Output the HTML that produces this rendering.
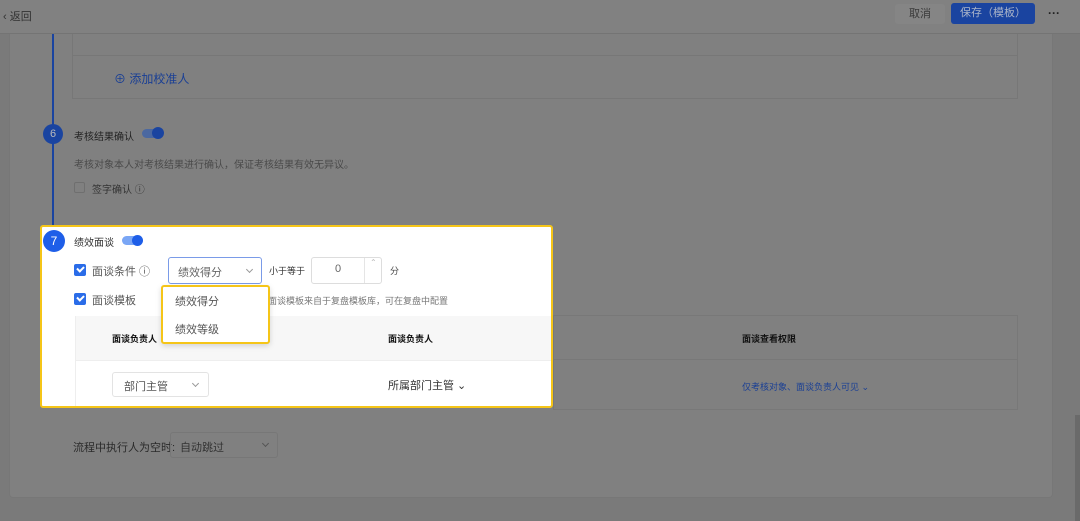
<!DOCTYPE html>
<html><head><meta charset="utf-8"><style>
*{margin:0;padding:0;box-sizing:border-box}
html,body{background:#7a7a7a}
body{width:1080px;height:521px;overflow:hidden;font-family:"Liberation Sans","Noto Sans CJK SC",sans-serif;position:relative;color:#222}
.a{position:absolute;white-space:nowrap}
.card{position:absolute;left:9px;top:0;width:1044px;height:498px;background:#808080;border:1px solid #777;border-radius:4px}
.hdr{position:absolute;left:0;top:0;width:1080px;height:34px;background:#818181;border-bottom:1px solid #747474}
.cb{position:absolute;width:12px;height:12px;background:#2a6ce8;border-radius:2px}
.cb:after{content:"";position:absolute;left:3px;top:2px;width:5px;height:3px;border-left:2px solid #fff;border-bottom:2px solid #fff;transform:rotate(-45deg)}
.chev{display:block;width:5px;height:5px;border-right:1px solid #999;border-bottom:1px solid #999;transform:rotate(45deg)}
</style></head><body>
<div class="card"></div>
<div class="hdr"></div>
<div class="a" style="left:3px;top:8px;font-size:11px;color:#333">‹ 返回</div>
<div class="a" style="left:895px;top:4px;width:50px;height:20px;background:#858585;border-radius:3px;font-size:11px;color:#3a3a3a;text-align:center;line-height:20px">取消</div>
<div class="a" style="left:951px;top:3px;width:84px;height:21px;background:#1a44a0;border-radius:3px;font-size:11px;color:#aab4c8;text-align:center;line-height:21px">保存（模板）</div>
<div class="a" style="left:1048px;top:6px;font-size:12px;color:#222;font-weight:bold">···</div>
<div class="a" style="left:1075px;top:415px;width:5px;height:106px;background:#6a6a6a"></div>
<div class="a" style="left:52px;top:34px;width:2px;height:200px;background:#1a44a0"></div>
<div class="a" style="left:72px;top:34px;width:946px;height:65px;border:1px solid #777;border-top:none;background:#808080"></div>
<div class="a" style="left:72px;top:55px;width:946px;height:1px;background:#777"></div>
<div class="a" style="left:114px;top:70px;font-size:12px;color:#1a3f94">⊕ 添加校准人</div>
<div class="a" style="left:43px;top:124px;width:20px;height:20px;border-radius:50%;background:#1a44a0;color:#bbb;font-size:11px;text-align:center;line-height:20px">6</div>
<div class="a" style="left:74px;top:128px;font-size:10px;color:#222">考核结果确认</div>
<div class="a" style="left:142px;top:129px;width:20px;height:9px;border-radius:5px;background:#4b68a0"></div>
<div class="a" style="left:152px;top:127px;width:12px;height:12px;border-radius:50%;background:#1a44a0"></div>
<div class="a" style="left:74px;top:156px;font-size:10px;color:#4a4a4a">考核对象本人对考核结果进行确认，保证考核结果有效无异议。</div>
<div class="a" style="left:74px;top:182px;width:11px;height:11px;border:1px solid #6f6f6f;border-radius:2px"></div>
<div class="a" style="left:92px;top:181px;font-size:10px;color:#333">签字确认 ⓘ</div>
<div class="a" style="left:73px;top:439px;font-size:11px;color:#2a2a2a">流程中执行人为空时:</div>
<div class="a" style="left:170px;top:432px;width:108px;height:26px;border:1px solid #777;border-radius:3px;font-size:11px;color:#333;padding:6px 0 0 9px">自动跳过</div>
<div class="a" style="left:263px;top:441px"><span class="chev" style="border-color:#555"></span></div>
<div class="a" style="left:553px;top:315px;width:465px;height:95px;background:#808080;border:1px solid #787878"></div>
<div class="a" style="left:553px;top:359px;width:465px;height:1px;background:#787878"></div>
<div class="a" style="left:742px;top:332px;font-size:9px;color:#111;font-weight:bold">面谈查看权限</div>
<div class="a" style="left:742px;top:380px;font-size:9px;color:#1a3f94">仅考核对象、面谈负责人可见 ⌄</div>
<div class="a" style="left:40px;top:225px;width:513px;height:183px;background:#fff;border:2px solid #f5c518;border-radius:3px;overflow:hidden">
 <div class="a" style="left:33px;top:89px;width:480px;height:45px;background:#f7f7f7"></div>
 <div class="a" style="left:33px;top:133px;width:480px;height:1px;background:#eee"></div>
 <div class="a" style="left:33px;top:89px;width:1px;height:100px;background:#eee"></div>
</div>
<div class="a" style="left:43px;top:230px;width:22px;height:22px;border-radius:50%;background:#1e5ee8;color:#fff;font-size:12px;text-align:center;line-height:22px">7</div>
<div class="a" style="left:74px;top:234px;font-size:10px;color:#333">绩效面谈</div>
<div class="a" style="left:122px;top:236px;width:20px;height:9px;border-radius:5px;background:#7aa6f5"></div>
<div class="a" style="left:132px;top:235px;width:11px;height:11px;border-radius:50%;background:#1e5ee8"></div>
<div class="cb" style="left:74px;top:264px"></div>
<div class="a" style="left:92px;top:263px;font-size:11px;color:#555">面谈条件 ⓘ</div>
<div class="a" style="left:168px;top:257px;width:94px;height:27px;border:1px solid #7a9be8;border-radius:3px;font-size:11px;color:#666;padding:6px 0 0 9px">绩效得分</div>
<div class="a" style="left:247px;top:267px"><span class="chev"></span></div>
<div class="a" style="left:269px;top:264px;font-size:9px;color:#333">小于等于</div>
<div class="a" style="left:311px;top:257px;width:71px;height:27px;border:1px solid #ddd;border-radius:3px"></div>
<div class="a" style="left:364px;top:258px;width:1px;height:25px;background:#e5e5e5"></div>
<div class="a" style="left:335px;top:263px;font-size:11px;color:#666">0</div>
<div class="a" style="left:370px;top:258px;font-size:8px;color:#bbb">⌃</div>
<div class="a" style="left:390px;top:264px;font-size:9px;color:#444">分</div>
<div class="cb" style="left:74px;top:293px"></div>
<div class="a" style="left:92px;top:292px;font-size:11px;color:#555">面谈模板</div>
<div class="a" style="left:268px;top:294px;font-size:9px;color:#777">面谈模板来自于复盘模板库，可在复盘中配置</div>
<div class="a" style="left:112px;top:332px;font-size:9px;color:#111;font-weight:bold">面谈负责人</div>
<div class="a" style="left:388px;top:332px;font-size:9px;color:#111;font-weight:bold">面谈负责人</div>
<div class="a" style="left:112px;top:372px;width:97px;height:25px;border:1px solid #e3e3e3;border-radius:3px;font-size:11px;color:#555;padding:5px 0 0 11px">部门主管</div>
<div class="a" style="left:193px;top:381px"><span class="chev"></span></div>
<div class="a" style="left:388px;top:377px;font-size:11px;color:#333">所属部门主管 ⌄</div>
<div class="a" style="left:161px;top:285px;width:109px;height:59px;background:#fff;border:2px solid #f5c518;border-radius:3px;box-shadow:0 2px 6px rgba(0,0,0,.15)"></div>
<div class="a" style="left:175px;top:293px;font-size:11px;color:#555">绩效得分</div>
<div class="a" style="left:175px;top:321px;font-size:11px;color:#555">绩效等级</div>
</body></html>
